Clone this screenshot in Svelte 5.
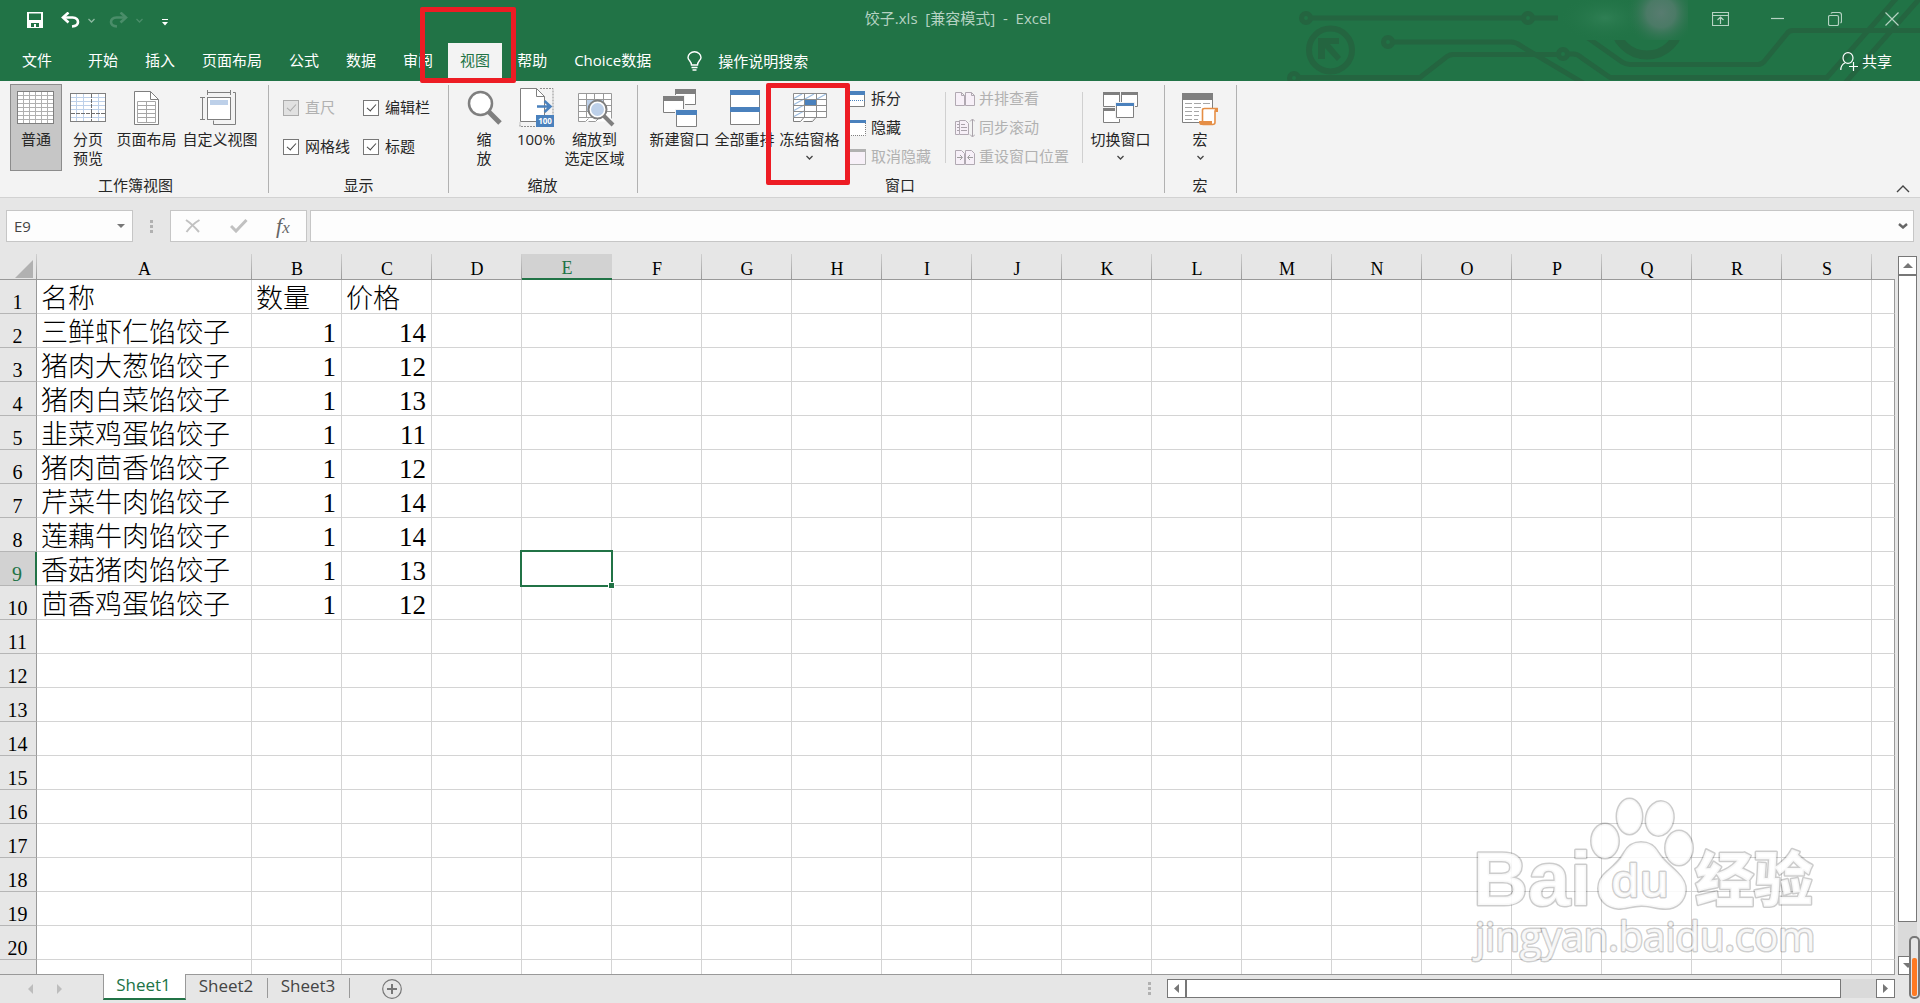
<script lang="ts">
  type Tab = { label: string; active?: boolean };

  const tabs: Tab[] = [
    { label: "开始" },
    { label: "插入" },
    { label: "页面布局" },
    { label: "公式" },
    { label: "数据" },
    { label: "审阅" },
    { label: "视图", active: true },
    { label: "帮助" },
    { label: "Choice数据" },
  ];

  const columns = "ABCDEFGHIJKLMNOPQRS".split("");
  const rowCount = 20;

  const data: (string | number)[][] = [
    ["名称", "数量", "价格"],
    ["三鲜虾仁馅饺子", 1, 14],
    ["猪肉大葱馅饺子", 1, 12],
    ["猪肉白菜馅饺子", 1, 13],
    ["韭菜鸡蛋馅饺子", 1, 11],
    ["猪肉茴香馅饺子", 1, 12],
    ["芹菜牛肉馅饺子", 1, 14],
    ["莲藕牛肉馅饺子", 1, 14],
    ["香菇猪肉馅饺子", 1, 13],
    ["茴香鸡蛋馅饺子", 1, 12],
  ];

  const sheets = ["Sheet1", "Sheet2", "Sheet3"];

  let selCol = $state(4);
  let selRow = $state(9);
  let activeSheet = $state("Sheet1");
  let formulaBar = $state(true);
  let gridlines = $state(true);
  let headings = $state(true);

  let cellName = $derived(columns[selCol] + selRow);

  function select(row: number, col: number) {
    selRow = row;
    selCol = col;
  }
</script>

{#snippet chevron()}
  <svg class="chev" width="7" height="5" viewBox="0 0 7 5" aria-hidden="true">
    <path d="M.5 1l3 3 3-3" fill="none" stroke="currentColor" stroke-width="1.3" />
  </svg>
{/snippet}

{#snippet bigIcon(name: string)}
  <svg class="big-icon" width="40" height="40" viewBox="0 0 40 40" fill="none" aria-hidden="true">
    {#if name === "normal"}
      <rect x="1.5" y="4.5" width="36" height="32" fill="#fff" stroke="#7f7f7f" />
      <path d="M7.5 5v31M13.5 5v31M19.5 5v31M25.5 5v31M31.5 5v31M2 8.5h35M2 12.5h35M2 16.5h35M2 20.5h35M2 24.5h35M2 28.5h35M2 32.5h35" stroke="#b0b0b0" />
    {:else if name === "break"}
      <rect x="2.5" y="6.5" width="35" height="28" fill="#fff" stroke="#7f7f7f" />
      <path d="M8.5 7v27M15.5 7v27M30.5 7v27M3 10.5h34M3 14.5h34M3 18.5h34M3 22.5h34M3 30.5h34" stroke="#bdd0e9" />
      <path d="M23.5 7v27M3 26.5h34" stroke="#6f6f6f" stroke-dasharray="4 1" />
    {:else if name === "layout"}
      <path d="M7.5 4.5h16l8 8v25h-24z" fill="#fff" stroke="#7f7f7f" />
      <path d="M23.5 4.5v8h8" stroke="#7f7f7f" />
      <path d="M10.5 14.5h18v21h-18zM19.5 14.5v21M10.5 18.5h18M10.5 22.5h18M10.5 26.5h18M10.5 30.5h18" stroke="#a6a6a6" />
    {:else if name === "custom"}
      <rect x="7.5" y="10.5" width="23" height="22" fill="#fff" stroke="#7f7f7f" />
      <path d="M10 13h18v5h-18z" fill="#bdd0e9" />
      <path d="M7.5 3v5M30.5 3v5M7.5 5.5h23M0 10.5h5M0 32.5h5M2.5 10.5v22M33 5.5h2.5v32h-22v-4" stroke="#7f7f7f" />
    {:else if name === "zoom"}
      <path d="M25 25l11 11" stroke="#7f7f7f" stroke-width="5" />
      <circle cx="16.5" cy="16.5" r="11.5" fill="#fff" stroke="#7f7f7f" stroke-width="2.5" />
    {:else if name === "hundred"}
      <path d="M24 1.5h13v38h-33v-4" stroke="#8f8f8f" stroke-dasharray="2 1" />
      <path d="M4.5 1.5h16l8 8v25h-24z" fill="#fff" stroke="#7f7f7f" />
      <path d="M20.5 1.5v8h8" stroke="#7f7f7f" />
      <path d="M21 19.5h13M28.5 14l6 5.5-6 5.5" stroke="#4a81bd" stroke-width="2.5" />
      <path d="M20 28h18v12h-18z" fill="#4a81bd" />
      <text x="29" y="37" class="tiny" text-anchor="middle" fill="#fff">100</text>
    {:else if name === "zoomsel"}
      <path d="M3.5 6.5h33v28h-20l-2-1-3 1h-8z" fill="#fff" />
      <path d="M3.5 31.5v-25h33v25M11.5 7v24M19.5 7v24M28.5 7v24M4 12.5h32M4 18.5h32M4 24.5h32M3.5 30.5h20M3.5 30.5v4h7l3-3M13.5 34.5h7l3-3" stroke="#999" />
      <path d="M12 13h16v11h-16z" fill="#bdd0e9" />
      <path d="M29 29l9 9" stroke="#7f7f7f" stroke-width="4" />
      <circle cx="22.5" cy="22.5" r="9" fill="#fff" stroke="#7f7f7f" stroke-width="2" />
      <circle cx="22.5" cy="22.5" r="6.5" fill="#bdd0e9" />
    {:else if name === "new"}
      <path d="M15.5 2.5h20v15h-20z" fill="#fff" stroke="#7f7f7f" />
      <path d="M15 2h21v5h-21z" fill="#7f7f7f" />
      <path d="M2 8h23v19h-23z" fill="#f3f3f3" />
      <path d="M3.5 9.5h20v16h-20z" fill="#fff" stroke="#7f7f7f" />
      <path d="M3 9h21v5h-21z" fill="#7f7f7f" />
      <path d="M15 22h23v18h-23z" fill="#f3f3f3" />
      <path d="M16.5 23.5h20v16h-20z" fill="#fff" stroke="#7f7f7f" />
      <path d="M16 23h21v5h-21z" fill="#4a81bd" />
    {:else if name === "arrange"}
      <path d="M5.5 3.5h29v34h-29z" fill="#fff" stroke="#7f7f7f" />
      <path d="M5 3h30v5h-30zM5 20h30v5h-30z" fill="#4a81bd" />
    {:else if name === "freeze"}
      <path d="M3.5 6.5h33v24h-13l-4 4h-16z" fill="#fff" />
      <path d="M3 12l9-5M3 18l11-6M3 24l11-6M3 30l11-6M15 12l9-5M27 12l9-5" stroke="#9dbde0" stroke-width="1.3" />
      <path d="M3.5 6.5h33v24h-33zM14.5 7v23M26.5 7v23M4 12.5h32M4 18.5h32M4 24.5h32" stroke="#8c8c8c" />
      <path d="M3.5 30.5v4h7l3-3.5M13.5 34.5h9l3-3.5" stroke="#7f7f7f" />
      <path d="M15 13h11v5h-11z" fill="#4a81bd" />
    {:else if name === "switch"}
      <path d="M2.5 5.5h16v14h-16zM20.5 5.5h16v14h-16zM2.5 21.5h16v14h-16z" fill="#fff" stroke="#7f7f7f" />
      <path d="M2 5h17v3h-17zM20 5h17v3h-17zM2 21h17v3h-17z" fill="#7f7f7f" />
      <path d="M14 15h20v17h-20z" fill="#f3f3f3" />
      <path d="M15.5 16.5h17v14h-17z" fill="#fff" stroke="#7f7f7f" />
      <path d="M15 16h18v3h-18z" fill="#4a81bd" />
    {:else if name === "macro"}
      <path d="M2.5 6.5h30v29h-30z" fill="#fff" stroke="#7f7f7f" />
      <path d="M2 6h31v7h-31z" fill="#7f7f7f" />
      <path d="M5 16.5h7M14 16.5h7M23 16.5h7M5 20.5h7M14 20.5h7M5 24.5h7M14 24.5h5M5 28.5h7M14 28.5h5M5 32.5h7M14 32.5h4" stroke="#a6a6a6" />
      <path d="M23 21.5h13v15h-13z" fill="#fff" />
      <path d="M22.5 34v-11q0-1.5 2-1.5h12.5v2.5h-2v11.5q0 2-2.5 2h-10" stroke="#e58e45" stroke-width="1.6" />
      <path d="M19 34h13v4h-11q-2 0-2-4zM34 21h4v4h-2z" fill="#e58e45" />
    {/if}
  </svg>
{/snippet}

{#snippet smallIcon(name: string)}
  <svg class="small-icon" width="20" height="20" viewBox="0 0 20 20" fill="none" aria-hidden="true">
    {#if name === "split"}
      <path d="M.5 2.5h17v15h-17z" fill="#fff" stroke="#7f7f7f" />
      <path d="M0 2h18v4h-18z" fill="#4a81bd" />
      <path d="M1 11.5h17" stroke="#4a81bd" stroke-dasharray="1 1" />
    {:else if name === "hide"}
      <path d="M.5 5v12.5h18v-12.5" fill="#fff" stroke="#7f7f7f" stroke-dasharray="1 1" />
      <path d="M0 2h19v3h-19z" fill="#4a81bd" />
    {:else if name === "unhide"}
      <path d="M.5 3.5h18v14h-18z" fill="#f7f0f8" stroke="#b1b1b1" />
      <path d="M0 2h19v3h-19z" fill="#b1b1b1" />
    {:else if name === "side"}
      <path d="M.5 3.5h6l3 3v10h-9zM10.5 3.5h6l3 3v10h-9zM6.5 3.5v3h3M16.5 3.5v3h3" fill="#f7f0f8" stroke="#b1a9b2" />
    {:else if name === "sync"}
      <path d="M4 3.5h-3.5v13h3.5M4.5 2.5h6l3 3v11h-9z" fill="#f7f0f8" stroke="#b1a9b2" />
      <path d="M2 6.5h2M2 9.5h2M2 12.5h2M6 6.5h4M6 9.5h6M6 12.5h6M17.5 1.5v17M15 3.5l2.5-2.5 2.5 2.5M15 16.5l2.5 2.5 2.5-2.5" stroke="#a9a2aa" />
    {:else}
      <path d="M.5 3.5h6l3 3v11h-9zM10.5 3.5h6l3 3v11h-9z" fill="#f7f0f8" stroke="#b1a9b2" />
      <path d="M2 10.5h5M5 8l2.5 2.5-2.5 2.5M18 10.5h-5M15 8l-2.5 2.5 2.5 2.5" stroke="#9f9f9f" />
    {/if}
  </svg>
{/snippet}

<div class="app">
  <header class="top">
    <svg class="circuit" width="640" height="81" viewBox="0 0 640 81" fill="none" aria-hidden="true">
      <defs>
        <radialGradient id="glow">
          <stop offset="0" stop-color="#587c70" />
          <stop offset=".4" stop-color="#4b7a66" />
          <stop offset="1" stop-color="#217346" stop-opacity="0" />
        </radialGradient>
        <radialGradient id="haze">
          <stop offset="0" stop-color="#2f7f54" />
          <stop offset="1" stop-color="#217346" stop-opacity="0" />
        </radialGradient>
      </defs>
      <g stroke="#246540" stroke-width="5">
        <circle cx="26" cy="18" r="4.5" />
        <circle cx="248" cy="18" r="4.5" />
        <circle cx="108" cy="42" r="4.5" />
        <circle cx="283" cy="54" r="4.5" />
        <circle cx="14" cy="78" r="4.5" />
        <path d="M31 18h212M253 18h25M113 42h118q5 0 10 4l62 37M19 77.5h121l27-21q3-2 6-2h105M288 54h5q5 0 9 4l28 19.5h217l70-80M565 83l76-86M308 38l34 24q4 2.5 8 2.5h128q4 0 7-4l22-27q2-3 6-3h130" />
        <circle cx="50.5" cy="50" r="21.5" stroke-width="6" />
        <circle cx="367" cy="22" r="33" stroke-width="9" />
      </g>
      <path d="M38 38h21v6h-9l11 13-4 4-12-13v11h-7z" fill="#246540" />
      <path d="M278 0h130v40h-130z" fill="#217346" />
      <ellipse cx="325" cy="18" rx="46" ry="24" fill="url(#haze)" />
      <svg x="278" width="130" height="40" viewBox="0 0 130 40">
        <circle cx="103" cy="13" r="36" fill="url(#glow)" />
      </svg>
    </svg>

    <div class="titlebar">
      <div class="qat">
        <button aria-label="保存">
          <svg width="16" height="16" viewBox="0 0 16 16"><path d="M0 0h16v16h-16z" fill="#fff" /><path d="M2 1.5h12v6.5h-12zM4 11h8v4h-3v-3h-2v3h-3z" fill="#217346" /></svg>
        </button>
        <button class="history" aria-label="撤消">
          <svg width="19" height="16" viewBox="0 0 19 16" fill="none" stroke="#fff"><path d="M2 5.5h9.5q5.5.5 5.5 4.5t-6 4.5" stroke-width="2.6" /><path d="M7.5.5l-5.5 5 5.5 5" stroke-width="2.6" /></svg>
          {@render chevron()}
        </button>
        <button class="history faded" aria-label="恢复">
          <svg width="19" height="16" viewBox="0 0 19 16" fill="none" stroke="currentColor"><path d="M17 5.5h-9.5q-5.5.5-5.5 4.5t6 4.5" stroke-width="2.6" /><path d="M11.5.5l5.5 5-5.5 5" stroke-width="2.6" /></svg>
          {@render chevron()}
        </button>
        <button aria-label="自定义快速访问工具栏">
          <svg width="6" height="8" viewBox="0 0 6 8" fill="#fff"><path d="M0 1h6v1h-6zM0 4h6l-3 3.5z" /></svg>
        </button>
      </div>
      <h1>饺子.xls&nbsp; [兼容模式]&nbsp; -&nbsp; Excel</h1>
      <div class="window-buttons">
        <button aria-label="功能区显示选项">
          <svg width="17" height="14" viewBox="0 0 17 14"><path d="M.5.5h16v13h-16zM1 3.5h15M8.5 12v-6.5M5.5 8l3-3 3 3" /></svg>
        </button>
        <button aria-label="最小化">
          <svg width="14" height="14" viewBox="0 0 14 14"><path d="M0 6.5h13" /></svg>
        </button>
        <button aria-label="向下还原">
          <svg width="14" height="14" viewBox="0 0 14 14"><rect x=".5" y="3.5" width="10" height="10" rx="1.5" /><path d="M3 1.5q.5-1 2-1h6q2.5 0 2.5 2.5v6q0 1.5-1 2" /></svg>
        </button>
        <button aria-label="关闭">
          <svg width="14" height="14" viewBox="0 0 14 14"><path d="M.5.5l13 13M13.5.5l-13 13" /></svg>
        </button>
      </div>
    </div>

    <nav class="tabs">
      <button class="tab file">文件</button>
      {#each tabs as tab}
        <button class="tab" class:active={tab.active}>{tab.label}</button>
      {/each}
      <button class="tell-me">
        <svg width="15" height="20" viewBox="0 0 15 20" fill="none" stroke="#fff" stroke-width="1.4"><path d="M4.5 14q0-2-2-4.5-1.5-1.5-1.5-3a6.5 5.8 0 0 1 13 0q0 1.5-1.5 3-2 2.5-2 4.5zM4.5 16.5h6M5.5 19h4" /></svg>
        操作说明搜索
      </button>
      <button class="share">
        <svg width="18" height="19" viewBox="0 0 18 19" fill="none" stroke="#fff" stroke-width="1.2"><ellipse cx="8" cy="6" rx="5" ry="5.4" /><path d="M.8 18q0-5 4-7M13.5 10v9M9 14.5h9" /></svg>
        共享
      </button>
    </nav>
  </header>

  <section class="ribbon" aria-label="视图">
    <div class="group views">
      <div class="tools">
        <button class="big w52 pressed">{@render bigIcon("normal")}<span>普通</span></button>
        <button class="big w52">{@render bigIcon("break")}<span>分页<br />预览</span></button>
        <button class="big w64">{@render bigIcon("layout")}<span>页面布局</span></button>
        <button class="big w82">{@render bigIcon("custom")}<span>自定义视图</span></button>
      </div>
      <div class="group-label">工作簿视图</div>
    </div>

    <div class="group">
      <div class="tools checks">
        <label class="disabled"><input type="checkbox" checked disabled />直尺</label>
        <label><input type="checkbox" bind:checked={formulaBar} />编辑栏</label>
        <label><input type="checkbox" bind:checked={gridlines} />网格线</label>
        <label><input type="checkbox" bind:checked={headings} />标题</label>
      </div>
      <div class="group-label">显示</div>
    </div>

    <div class="group zooming">
      <div class="tools">
        <button class="big w52">{@render bigIcon("zoom")}<span>缩<br />放</span></button>
        <button class="big w52">{@render bigIcon("hundred")}<span>100%</span></button>
        <button class="big w64">{@render bigIcon("zoomsel")}<span>缩放到<br />选定区域</span></button>
      </div>
      <div class="group-label">缩放</div>
    </div>

    <div class="group windows">
      <div class="tools">
        <button class="big w64">{@render bigIcon("new")}<span>新建窗口</span></button>
        <button class="big w64">{@render bigIcon("arrange")}<span>全部重排</span></button>
        <button class="big w64">{@render bigIcon("freeze")}<span>冻结窗格</span>{@render chevron()}</button>
        <div class="stack">
          <button class="small">{@render smallIcon("split")}拆分</button>
          <button class="small">{@render smallIcon("hide")}隐藏</button>
          <button class="small" disabled>{@render smallIcon("unhide")}取消隐藏</button>
        </div>
        <div class="stack">
          <button class="small" disabled>{@render smallIcon("side")}并排查看</button>
          <button class="small" disabled>{@render smallIcon("sync")}同步滚动</button>
          <button class="small" disabled>{@render smallIcon("reset")}重设窗口位置</button>
        </div>
        <button class="big w64 switch">{@render bigIcon("switch")}<span>切换窗口</span>{@render chevron()}</button>
      </div>
      <div class="group-label">窗口</div>
    </div>

    <div class="group macros">
      <div class="tools">
        <button class="big w52">{@render bigIcon("macro")}<span>宏</span>{@render chevron()}</button>
      </div>
      <div class="group-label">宏</div>
    </div>

    <button class="collapse" aria-label="折叠功能区">
      <svg width="14" height="8" viewBox="0 0 14 8" fill="none" stroke="#444" stroke-width="1.4"><path d="M1 7l6-6 6 6" /></svg>
    </button>
  </section>

  <section class="formula-bar">
    <div class="name-box">
      <input aria-label="名称框" value={cellName} />
      <svg width="8" height="4" viewBox="0 0 8 4" fill="#777"><path d="M0 0h8l-4 4z" /></svg>
    </div>
    <span class="grip"></span>
    <div class="formula-actions">
      <button aria-label="取消">
        <svg width="16" height="14" viewBox="0 0 16 14" fill="none" stroke="#c1c1c1" stroke-width="2"><path d="M1 1q6 4 13 12M14.5 1q-7 4-13 12" /></svg>
      </button>
      <button aria-label="输入">
        <svg width="18" height="14" viewBox="0 0 18 14" fill="none" stroke="#c1c1c1" stroke-width="3"><path d="M1 7l5 5 10.5-11" /></svg>
      </button>
      <button class="fx" aria-label="插入函数"><i>f</i><i class="sub">x</i></button>
    </div>
    <div class="formula-box">
      <input aria-label="编辑栏" value="" />
      <svg width="10" height="6" viewBox="0 0 10 6" fill="none" stroke="#666" stroke-width="2.4"><path d="M1 1l4 3.5 4-3.5" /></svg>
    </div>
  </section>

  <main class="sheet">
    <div class="grid">
      <table>
        <colgroup>
          <col class="c-head" />
          <col class="c-name" />
          {#each columns.slice(1) as _}<col class="c-std" />{/each}
          <col />
        </colgroup>
        <thead>
          <tr>
            <th class="corner" aria-label="全选">
              <svg width="18" height="18" viewBox="0 0 18 18"><path d="M18 0v18h-18z" fill="#b1b1b1" /></svg>
            </th>
            {#each columns as col, c}
              <th class:current={c === selCol}>{col}</th>
            {/each}
            <th class="rest"></th>
          </tr>
        </thead>
        <tbody>
          {#each { length: rowCount } as _, r}
            <tr>
              <th class:current={r + 1 === selRow}>{r + 1}</th>
              {#each columns as _, c}
                <td class:num={typeof data[r]?.[c] === "number"} onclick={() => select(r + 1, c)}>
                  {data[r]?.[c] ?? ""}
                  {#if r + 1 === selRow && c === selCol}
                    <span class="selection"></span>
                  {/if}
                </td>
              {/each}
              <td class="rest"></td>
            </tr>
          {/each}
          <!-- partly scrolled row at the bottom edge -->
          <tr>
            <th></th>
            {#each columns as _}<td></td>{/each}
            <td class="rest"></td>
          </tr>
        </tbody>
      </table>
    </div>
    <div class="vscroll">
      <button aria-label="向上滚动"><svg width="10" height="5" viewBox="0 0 10 5"><path d="M0 5l5-5 5 5z" /></svg></button>
      <div class="track"><div class="thumb"></div></div>
      <button aria-label="向下滚动"><svg width="10" height="5" viewBox="0 0 10 5"><path d="M0 0l5 5 5-5z" /></svg></button>
    </div>
  </main>

  <footer class="bottom">
    <div class="sheet-nav">
      <svg width="5" height="10" viewBox="0 0 5 10" fill="#bdbdbd"><path d="M5 0v10l-5-5z" /></svg>
      <svg width="5" height="10" viewBox="0 0 5 10" fill="#bdbdbd"><path d="M0 0v10l5-5z" /></svg>
    </div>
    {#each sheets as name}
      <button class="sheet-tab" class:active={name === activeSheet} onclick={() => (activeSheet = name)}>{name}</button>
    {/each}
    <button class="add-sheet" aria-label="新工作表">
      <svg width="20" height="20" viewBox="0 0 20 20" fill="none" stroke="#777"><circle cx="10" cy="10" r="9.3" stroke-width="1.2" /><path d="M10 5v10M5 10h10" stroke-width="2" /></svg>
    </button>
    <span class="grip"></span>
    <div class="hscroll">
      <button aria-label="向左滚动"><svg width="5" height="9" viewBox="0 0 5 9"><path d="M5 0v9l-5-4.5z" /></svg></button>
      <div class="track"><div class="thumb"></div></div>
      <button aria-label="向右滚动"><svg width="5" height="9" viewBox="0 0 5 9"><path d="M0 0v9l5-4.5z" /></svg></button>
    </div>
  </footer>

  <svg class="watermark" width="420" height="200" viewBox="0 0 420 200" aria-hidden="true">
    <g class="wm">
      <text x="33" y="125" class="wm-bai">Bai</text>
      <ellipse cx="165" cy="61" rx="13.5" ry="17" />
      <ellipse cx="189.5" cy="36.5" rx="12.5" ry="17.5" />
      <ellipse cx="219.7" cy="38.5" rx="13.5" ry="17" transform="rotate(12 219.7 38.5)" />
      <ellipse cx="239" cy="68" rx="13.5" ry="17" />
      <path d="M201 62.5c8 0 13 3 17 10 6 9 12 13 19 20 6 6 9 11 8.5 18-1 11-9 18-20 18-9 0-15-3-24-3s-15 3-23 3c-12-1-20-9-20-20 0-7 3-12 9-17 7-6 12-10 17-19 4-7 9-10 16.5-10z" />
      <text x="171" y="117" class="wm-du">du</text>
      <text x="255" y="121" class="wm-cjk">经验</text>
      <text x="35" y="171" class="wm-url">jingyan.baidu.com</text>
    </g>
  </svg>

  <div class="mark mark-tab"></div>
  <div class="mark mark-freeze"></div>
  <div class="meter"><span></span></div>
</div>

<style>
  :global(body) {
    margin: 0;
  }

  .app {
    position: relative;
    display: flex;
    flex-direction: column;
    height: 100vh;
    overflow: hidden;
    background: #e6e6e6;
    color: #262626;
    font-family: "Open Sans", "Noto Sans CJK SC", sans-serif;
    font-size: 15px;
    line-height: 19px;
  }

  button {
    padding: 0;
    border: 0;
    background: none;
    color: inherit;
    font: inherit;
    white-space: nowrap;
  }

  svg {
    flex: none;
    display: block;
  }

  /* title bar and tabs */
  .top {
    position: relative;
    flex: none;
    background: #217346;
    color: #fff;
  }

  .circuit {
    position: absolute;
    top: 0;
    right: 0;
  }

  .titlebar {
    position: relative;
    display: grid;
    grid-template-columns: 1fr auto 1fr;
    align-items: start;
    height: 43px;
  }

  .qat {
    display: flex;
    align-items: center;
    gap: 18px;
    padding-left: 27px;
    height: 40px;
  }

  .qat button {
    display: flex;
    align-items: center;
  }

  .qat .history {
    gap: 8px;
    width: 35px;
    margin-right: -5px;
  }

  .qat .history:not(.faded) {
    color: #8cb9a0;
  }

  .qat .history.faded {
    color: #4a8d69;
  }

  .qat button:last-child {
    margin-left: 5px;
    padding-top: 4px;
  }

  h1 {
    margin: 0;
    padding-top: 9px;
    padding-right: 4px;
    color: #b5d2c2;
    font-size: 15px;
    font-weight: 400;
  }

  .window-buttons {
    display: flex;
    justify-content: flex-end;
    height: 38px;
  }

  .window-buttons button {
    display: grid;
    place-items: center;
    width: 57px;
  }

  .window-buttons svg {
    fill: none;
    stroke: #b5d2c2;
    stroke-width: 1.2;
  }

  .tabs {
    position: relative;
    display: flex;
    gap: 3px;
    height: 38px;
  }

  .tab {
    padding: 0 12px 4px;
  }

  .tab.file {
    padding-left: 22px;
    padding-right: 21px;
  }

  .tab.active {
    background: #f3f3f3;
    color: #217346;
  }

  .tell-me,
  .share {
    display: flex;
    align-items: center;
    gap: 16px;
    padding-bottom: 2px;
  }

  .tell-me {
    padding-left: 21px;
  }

  .share {
    gap: 4px;
    margin-left: auto;
    padding-right: 28px;
  }

  /* ribbon */
  .ribbon {
    display: flex;
    flex: none;
    height: 116px;
    background: #f3f3f3;
    border-bottom: 1px solid #d2d2d2;
  }

  .group {
    display: flex;
    flex-direction: column;
    justify-content: space-between;
    padding: 3px 8px 2px;
    border-right: 1px solid #b1b1b1;
    border-image: linear-gradient(
        transparent 5px,
        #b1b1b1 5px,
        #b1b1b1 111px,
        transparent 111px
      )
      1;
  }

  .group.views {
    padding-left: 10px;
    padding-right: 7px;
  }

  .group.zooming {
    padding-left: 9px;
    padding-right: 10px;
  }

  .group.windows {
    padding-left: 9px;
    padding-right: 11px;
  }

  .group.macros {
    padding-left: 9px;
    padding-right: 10px;
  }

  .tools {
    display: flex;
  }

  .group-label {
    text-align: center;
  }

  .big {
    display: flex;
    flex-direction: column;
    align-items: center;
    box-sizing: border-box;
    height: 87px;
    padding-top: 2px;
    border: 1px solid transparent;
  }

  .big.pressed {
    background: #c6c6c6;
    border-color: #8c8c8c;
  }

  .big-icon {
    margin-bottom: 3px;
  }

  .big .chev {
    margin-top: 6px;
    color: #444;
  }

  .w52 {
    width: 52px;
  }

  .w64 {
    width: 65px;
  }

  .w82 {
    width: 82px;
  }

  .tiny {
    font-size: 8px;
    font-weight: 700;
  }

  .checks {
    display: grid;
    grid-template-columns: 80px 77px;
    grid-auto-rows: 39px;
    padding-top: 4px;
    padding-left: 6px;
  }

  .checks label {
    display: flex;
    align-items: center;
    gap: 6px;
  }

  .checks label.disabled {
    color: #b1b1b1;
  }

  .checks input {
    appearance: none;
    display: grid;
    place-items: center;
    box-sizing: border-box;
    width: 16px;
    height: 16px;
    margin: 0;
    background: #fff;
    border: 1px solid #777;
  }

  .checks input:disabled {
    background: #e1e1e1;
    border-color: #ababab;
  }

  .checks input:checked::after {
    content: "";
    width: 4px;
    height: 8px;
    margin-bottom: 3px;
    border: solid #444;
    border-width: 0 1px 1px 0;
    transform: rotate(42deg);
  }

  .checks input:disabled::after {
    border-color: #ababab;
  }

  .stack {
    display: flex;
    flex-direction: column;
    height: 87px;
    padding: 0 14px 0 5px;
    border-right: 1px solid #d0d0d0;
    border-image: linear-gradient(
        transparent 9px,
        #d0d0d0 9px,
        #d0d0d0 78px,
        transparent 78px
      )
      1;
  }

  .stack + .stack {
    padding-left: 9px;
    padding-right: 13px;
  }

  .small {
    display: flex;
    align-items: center;
    gap: 4px;
    height: 29px;
  }

  .small:disabled {
    color: #b1b1b1;
  }

  .switch {
    margin-left: 5px;
  }

  .collapse {
    align-self: flex-end;
    margin-left: auto;
    padding: 0 10px 4px;
  }

  /* formula bar */
  .formula-bar {
    display: flex;
    flex: none;
    align-items: center;
    height: 32px;
    padding: 12px 6px;
  }

  .name-box,
  .formula-box,
  .formula-actions {
    display: flex;
    align-items: center;
    box-sizing: border-box;
    height: 32px;
    background: #fdfdfd;
    border: 1px solid #c6c6c6;
  }

  .name-box {
    width: 127px;
    padding: 0 7px;
  }

  .formula-bar input {
    flex: 1;
    min-width: 0;
    padding: 0;
    border: 0;
    outline: 0;
    background: none;
    color: #444;
    font: inherit;
  }

  .grip {
    width: 3px;
    height: 13px;
    background: repeating-linear-gradient(#b1b1b1 0 3px, transparent 3px 5px);
  }

  .formula-bar .grip {
    margin: 0 17px;
  }

  .formula-actions {
    width: 137px;
    margin-right: 3px;
    padding-right: 2px;
    justify-content: space-around;
  }

  .fx {
    color: #666;
    font-family: "Liberation Serif", serif;
    font-size: 22px;
  }

  .fx .sub {
    font-size: 17px;
  }

  .formula-box {
    flex: 1;
    padding: 0 5px;
  }

  /* worksheet */
  .sheet {
    display: flex;
    flex: 1;
    min-height: 0;
  }

  .grid {
    flex: 1;
    min-width: 0;
    overflow: hidden;
    border-bottom: 1px solid #999;
  }

  table {
    width: 100%;
    table-layout: fixed;
    border-collapse: separate;
    border-spacing: 0;
    font-family: "Liberation Serif", "Noto Sans CJK SC", serif;
    color: #000;
  }

  .c-head {
    width: 37px;
  }

  .c-name {
    width: 215px;
  }

  .c-std {
    width: 90px;
  }

  th,
  td {
    position: relative;
    box-sizing: border-box;
    height: 34px;
    padding: 0;
    white-space: nowrap;
  }

  th {
    background: #e6e6e6;
    font-size: 20px;
    font-weight: 400;
    line-height: 22px;
  }

  thead th {
    height: 26px;
    padding-top: 4px;
    border-bottom: 1px solid #999;
    background: linear-gradient(#d0d0d0, #999) right / 1px 100% no-repeat #e6e6e6;
    font-size: 18px;
    line-height: 20px;
  }

  thead th.rest {
    background: #e6e6e6;
  }

  thead th.current {
    background: #d2d2d2;
    border-bottom: 2px solid #217346;
    color: #217346;
  }

  .corner svg {
    margin-left: 15px;
  }

  tbody th {
    padding-top: 11px;
    padding-right: 1px;
    border-right: 1px solid #999;
    border-bottom: 1px solid #b5b5b5;
  }

  tbody th.current {
    background: #d2d2d2;
    border-right: 2px solid #217346;
    color: #217346;
  }

  td {
    padding: 4px 5px 0 4px;
    background: #fff;
    border-right: 1px solid #d4d4d4;
    border-bottom: 1px solid #d4d4d4;
    font-size: 27px;
    font-weight: 300;
    line-height: 28px;
  }

  td.num {
    text-align: right;
  }

  td.rest {
    border-right-color: #999;
  }

  .selection {
    position: absolute;
    inset: -2px;
    z-index: 1;
    border: 2px solid #217346;
  }

  .selection::after {
    content: "";
    position: absolute;
    right: -4px;
    bottom: -4px;
    width: 5px;
    height: 5px;
    background: #217346;
    border: 1px solid #fff;
  }

  .vscroll {
    display: flex;
    flex-direction: column;
    width: 19px;
    padding: 2px 3px 0;
  }

  .vscroll button,
  .hscroll button {
    display: grid;
    place-items: center;
    flex: none;
    box-sizing: border-box;
    width: 19px;
    height: 19px;
    background: #fff;
    border: 1px solid #777;
  }

  .vscroll svg,
  .hscroll svg {
    fill: #777;
  }

  .track {
    flex: 1;
    background: #dadada;
  }

  .thumb {
    box-sizing: border-box;
    background: #fff;
    border: 1px solid #777;
  }

  .vscroll .thumb {
    height: 95%;
  }

  /* sheet tabs */
  .bottom {
    display: flex;
    flex: none;
    height: 28px;
    padding-right: 25px;
  }

  .sheet-nav {
    display: flex;
    align-items: center;
    gap: 24px;
    box-sizing: border-box;
    width: 103px;
    padding-left: 28px;
  }

  .sheet-tab {
    width: 82px;
    height: 25px;
    color: #444;
    font-size: 17px;
    line-height: 20px;
    padding-right: 2px;
    padding-bottom: 4px;
    background: linear-gradient(#999, #999) right 3px / 1px 20px no-repeat;
  }

  .sheet-tab.active {
    box-sizing: border-box;
    width: 83px;
    margin-top: -1px;
    height: 26px;
    padding-bottom: 2px;
    border: solid #999;
    border-width: 0 1px;
    border-bottom: 2px solid #217346;
    background: #fff;
    color: #217346;
  }

  .add-sheet {
    margin-left: 32px;
    align-self: center;
  }

  .bottom .grip {
    margin: 7px 16px 0 auto;
  }

  .hscroll {
    display: flex;
    width: calc(38% + 8px);
    margin-top: 4px;
  }

  .hscroll .track {
    height: 19px;
  }

  .hscroll .thumb {
    width: 95%;
    height: 19px;
  }

  /* overlays */
  .watermark {
    position: absolute;
    right: 60px;
    bottom: 23px;
    pointer-events: none;
  }

  .wm {
    fill: rgba(255, 255, 255, 0.85);
    stroke: rgba(0, 0, 0, 0.2);
    stroke-width: 3;
    stroke-linejoin: round;
    paint-order: stroke;
  }

  .wm-bai {
    font: 700 76px "Liberation Sans", sans-serif;
  }

  .wm-du {
    font: 600 46px "Open Sans", sans-serif;
  }

  .wm-cjk {
    font: 900 59px "Noto Sans CJK SC", sans-serif;
  }

  .wm-url {
    font: 400 40px "Open Sans", sans-serif;
  }

  .mark {
    position: absolute;
    box-sizing: border-box;
    border: 5px solid #ed1c24;
    border-radius: 2px;
    pointer-events: none;
  }

  .mark-tab {
    left: 420px;
    top: 7px;
    width: 96px;
    height: 76px;
  }

  .mark-freeze {
    left: 766px;
    top: 83px;
    width: 84px;
    height: 102px;
  }

  .meter {
    position: absolute;
    right: 0;
    bottom: 4px;
    display: flex;
    align-items: flex-end;
    box-sizing: border-box;
    width: 11px;
    height: 63px;
    padding: 1px;
    background: #e6e6e6;
    border: 2px solid #777;
    border-radius: 5px;
  }

  .meter span {
    flex: 1;
    height: 38px;
    background: #ff7a22;
    border-radius: 2px;
  }
</style>
